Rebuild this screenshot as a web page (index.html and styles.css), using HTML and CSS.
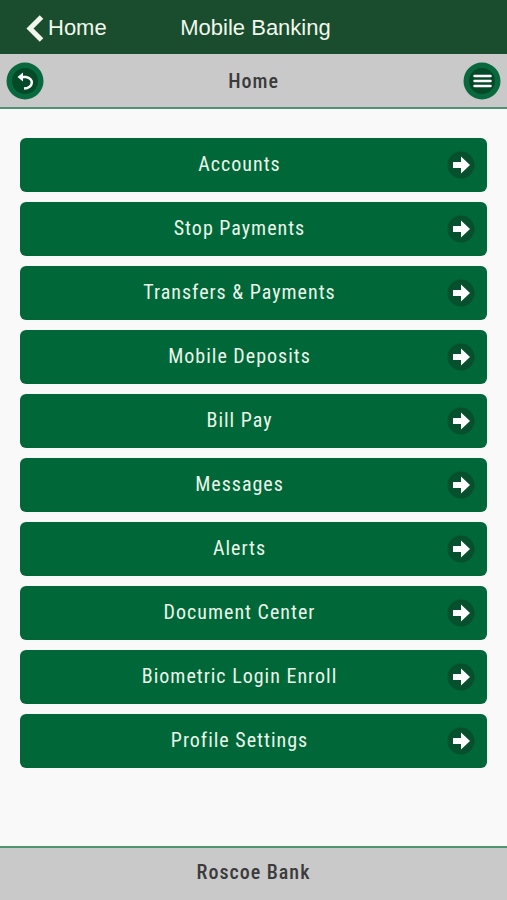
FILE: index.html
```html
<!DOCTYPE html>
<html lang="en">
<head>
<meta charset="utf-8">
<meta name="viewport" content="width=device-width, initial-scale=1">
<title>Mobile Banking</title>
<link rel="stylesheet" href="styles.css">
</head>
<body>
<svg width="0" height="0" class="symbols" aria-hidden="true">
  <symbol id="arrow" viewBox="0 0 28 28">
    <circle cx="14" cy="14" r="13.5" fill="#07502e"/>
    <path d="M6 11h8V5.500L23 14l-9 8.500V17H6z" fill="#fff"/>
  </symbol>
</svg>
<header class="app-bar">
  <a class="app-back" href="#home">
    <svg class="chevron" viewBox="0 0 20 28" aria-hidden="true"><path d="M17.500 3L6 14.500L17.500 26" fill="none" stroke="#f1f7ec" stroke-width="5"/></svg>
    <span>Home</span>
  </a>
  <span class="app-title">Mobile Banking</span>
</header>
<div class="page-bar">
  <button class="round" type="button" aria-label="Back">
    <svg viewBox="0 0 38 38" aria-hidden="true">
      <circle cx="19" cy="19" r="18.500" fill="#08693f"/>
      <circle cx="19" cy="19" r="13" fill="#044a29"/>
      <path d="M15 15h5c8.500 1.500 7.500 11-2 11.500" fill="none" stroke="#fff" stroke-width="2.500"/>
      <path d="M11.500 15l5.500-4.500v9z" fill="#fff"/>
    </svg>
  </button>
  <h1 class="page-title">Home</h1>
  <button class="round" type="button" aria-label="Menu">
    <svg viewBox="0 0 38 38" aria-hidden="true">
      <circle cx="19" cy="19" r="18.500" fill="#08693f"/>
      <circle cx="19" cy="19" r="13" fill="#044a29"/>
      <path d="M11.500 14h16M11.500 19h16M11.500 24h16" stroke="#fff" stroke-width="2.500" stroke-linecap="round"/>
    </svg>
  </button>
</div>
<main class="menu">
  <a class="item" href="#accounts"><span>Accounts</span><svg class="arrow" aria-hidden="true"><use href="#arrow"/></svg></a>
  <a class="item" href="#stop"><span>Stop Payments</span><svg class="arrow" aria-hidden="true"><use href="#arrow"/></svg></a>
  <a class="item" href="#transfers"><span>Transfers &amp; Payments</span><svg class="arrow" aria-hidden="true"><use href="#arrow"/></svg></a>
  <a class="item" href="#deposits"><span>Mobile Deposits</span><svg class="arrow" aria-hidden="true"><use href="#arrow"/></svg></a>
  <a class="item" href="#billpay"><span>Bill Pay</span><svg class="arrow" aria-hidden="true"><use href="#arrow"/></svg></a>
  <a class="item" href="#messages"><span>Messages</span><svg class="arrow" aria-hidden="true"><use href="#arrow"/></svg></a>
  <a class="item" href="#alerts"><span>Alerts</span><svg class="arrow" aria-hidden="true"><use href="#arrow"/></svg></a>
  <a class="item" href="#documents"><span>Document Center</span><svg class="arrow" aria-hidden="true"><use href="#arrow"/></svg></a>
  <a class="item" href="#biometric"><span>Biometric Login Enroll</span><svg class="arrow" aria-hidden="true"><use href="#arrow"/></svg></a>
  <a class="item" href="#profile"><span>Profile Settings</span><svg class="arrow" aria-hidden="true"><use href="#arrow"/></svg></a>
</main>
<footer class="footer">Roscoe Bank</footer>
</body>
</html>
```
FILE: styles.css
```css
* {
  box-sizing: border-box;
}

body {
  margin: 0;
  min-height: 100vh;
  display: flex;
  flex-direction: column;
  background: #f9f9f9;
  color: #3b3b3b;
  font: 20px/24px "Roboto Condensed", Roboto, sans-serif;
  letter-spacing: 1px;
}

.symbols {
  position: absolute;
}

.app-bar {
  display: grid;
  grid-template-columns: 1fr auto 1fr;
  align-items: center;
  height: 54px;
  padding: 2px 20px 0 24px;
  background: #1a4d2e;
  color: #f1f7ec;
  font: 22px/26px "Liberation Sans", Arial, sans-serif;
  letter-spacing: normal;
}

.app-back {
  display: flex;
  align-items: center;
  gap: 4px;
  color: inherit;
  text-decoration: none;
}

.chevron {
  width: 20px;
  height: 28px;
}

.page-bar {
  display: grid;
  grid-template-columns: 38px 1fr 38px;
  align-items: center;
  height: 55px;
  padding: 0 6px;
  background: #c9c9c9;
  border-bottom: 2px solid #4f9274;
}

.round {
  width: 38px;
  height: 38px;
  padding: 0;
  border: 0;
  background: none;
}

.round svg {
  display: block;
  width: 38px;
  height: 38px;
}

.page-title {
  margin: 0;
  font-size: 20px;
  font-weight: 500;
  text-align: center;
}

.menu {
  flex: 1;
  display: flex;
  flex-direction: column;
  gap: 10px;
  padding: 29px 20px;
}

.item {
  display: grid;
  grid-template-columns: 1fr 28px;
  align-items: center;
  height: 54px;
  padding: 0 12px;
  border-radius: 6px;
  background: #006738;
  color: #eaf6ea;
  text-align: center;
  text-decoration: none;
}

.item span {
  padding: 0 0 2px;
}

.arrow {
  width: 28px;
  height: 28px;
}

.footer {
  padding: 12px 0 16px;
  border-top: 2px solid #4f9274;
  background: #c9c9c9;
  font-weight: 500;
  text-align: center;
}
```
